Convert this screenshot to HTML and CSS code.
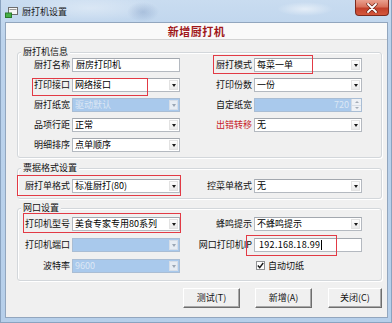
FILE: index.html
```html
<!DOCTYPE html>
<html lang="zh">
<head>
<meta charset="utf-8">
<title>厨打机设置</title>
<link rel="stylesheet" href="styles.css">
</head>
<body>
<div class="window">
  <div class="titlebar">
    <svg class="app-icon" width="14" height="12" viewBox="0 0 14 12">
      <rect x="3.5" y="1.5" width="9" height="7" fill="#f6f6f6" stroke="#6d6d6d"/>
      <rect x="4.5" y="3" width="7" height="1" fill="#9a9a9a"/>
      <rect x="0.5" y="7" width="6" height="4.5" fill="#46b046" stroke="#2c7a2c"/>
    </svg>
    <span class="title">厨打机设置</span>
    <span class="close">
      <svg width="12" height="10" viewBox="0 0 12 10">
        <path d="M2 1 L10 9 M10 1 L2 9" stroke="#6a2418" stroke-width="3.2" stroke-linecap="round"/>
        <path d="M2 1 L10 9 M10 1 L2 9" stroke="#ffffff" stroke-width="1.8" stroke-linecap="round"/>
      </svg>
    </span>
  </div>

  <div class="client">
    <div class="header">新增厨打机</div>
    <div class="body">
      <div class="group g1">
        <span class="group-label">厨打机信息</span>
        <div class="form rows20">
          <span class="lbl">厨打名称</span>
          <div class="field input">厨房打印机</div>
          <span class="lbl">厨打模式</span>
          <div class="field select"><span class="val">每菜一单</span><i class="arrow"></i></div>

          <span class="lbl">打印接口</span>
          <div class="field select"><span class="val">网络接口</span><i class="arrow"></i></div>
          <span class="lbl">打印份数</span>
          <div class="field select"><span class="val">一份</span><i class="arrow"></i></div>

          <span class="lbl">厨打纸宽</span>
          <div class="field select disabled"><span class="val">驱动默认</span><i class="arrow"></i></div>
          <span class="lbl">自定纸宽</span>
          <div class="field spin disabled"><span class="val num">720</span><span class="spinbtn"><i class="up"></i><i class="down"></i></span></div>

          <span class="lbl">品项行距</span>
          <div class="field select"><span class="val">正常</span><i class="arrow"></i></div>
          <span class="lbl red">出错转移</span>
          <div class="field select"><span class="val">无</span><i class="arrow"></i></div>

          <span class="lbl">明细排序</span>
          <div class="field select"><span class="val">点单顺序</span><i class="arrow"></i></div>
        </div>
      </div>

      <div class="group g2">
        <span class="group-label">票据格式设置</span>
        <div class="form rows20">
          <span class="lbl">厨打单格式</span>
          <div class="field select"><span class="val">标准厨打(80)</span><i class="arrow"></i></div>
          <span class="lbl">控菜单格式</span>
          <div class="field select"><span class="val">无</span><i class="arrow"></i></div>
        </div>
      </div>

      <div class="group g3">
        <span class="group-label">网口设置</span>
        <div class="form rows21">
          <span class="lbl">打印机型号</span>
          <div class="field select"><span class="val">美食专家专用80系列</span><i class="arrow"></i></div>
          <span class="lbl">蜂鸣提示</span>
          <div class="field select"><span class="val">不蜂鸣提示</span><i class="arrow"></i></div>

          <span class="lbl">打印机端口</span>
          <div class="field select disabled"><span class="val"></span><i class="arrow"></i></div>
          <span class="lbl">网口打印机IP</span>
          <div class="field input ip">192.168.18.99<i class="caret"></i></div>

          <span class="lbl">波特率</span>
          <div class="field select disabled"><span class="val">9600</span><i class="arrow"></i></div>
          <span class="lbl"></span>
          <label class="check"><span class="box"><svg width="7" height="7" viewBox="0 0 7 7"><path d="M0.8 3.6 L2.7 5.6 L6.2 1" fill="none" stroke="#1a1a1a" stroke-width="1.4"/></svg></span>自动切纸</label>
        </div>
      </div>

      <div class="buttons">
        <span class="btn b1">测试(T)</span>
        <span class="btn b2">新增(A)</span>
        <span class="btn b3">关闭(C)</span>
      </div>
    </div>
  </div>

  <div class="mark m1"></div>
  <div class="mark m2"></div>
  <div class="mark m3"></div>
  <div class="mark m4"></div>
  <div class="mark m5"></div>
</div>
</body>
</html>
```

FILE: styles.css
```css
html, body {
  margin: 0;
  padding: 0;
}

body {
  width: 392px;
  height: 323px;
  overflow: hidden;
}

.window {
  position: relative;
  width: 392px;
  height: 323px;
  overflow: hidden;
  font-family: "Noto Sans CJK SC", "Noto Sans", sans-serif;
  font-size: 9px;
  color: #000;
  background: linear-gradient(to bottom, #c9dcf0 0%, #bcd3ec 12%, #b6cfea 100%);
  box-shadow: inset 1px 0 0 #8aa3c0, inset -1px 0 0 #8aa3c0, inset 0 -1px 0 #8aa3c0;
}

/* title bar */
.titlebar {
  height: 22px;
  display: flex;
  align-items: center;
  padding-left: 5px;
  box-sizing: border-box;
  background:
    radial-gradient(ellipse 28px 7px at 305px 9px, rgba(255,255,255,0.55), rgba(255,255,255,0) 100%),
    radial-gradient(ellipse 16px 10px at 143px 12px, rgba(110,140,185,0.35), rgba(110,140,185,0) 100%),
    radial-gradient(ellipse 70px 14px at 90px 8px, rgba(255,255,255,0.35), rgba(255,255,255,0) 100%);
}

.app-icon {
  flex: none;
  margin-right: 3px;
  margin-top: 1px;
}

.title {
  color: #1b1b1b;
  line-height: 12px;
  margin-top: 1px;
}

.close {
  margin-left: auto;
  margin-right: 3px;
  align-self: flex-start;
  width: 34px;
  height: 16px;
  box-sizing: border-box;
  border: 1px solid #7d2a1d;
  border-top: none;
  border-radius: 0 0 4px 4px;
  background: linear-gradient(to bottom, #eaa08e 0%, #d9725c 45%, #c2402a 55%, #d4573c 100%);
  display: flex;
  align-items: center;
  justify-content: center;
}

/* client area */
.client {
  margin-left: 5px;
  width: 383px;
  height: 296px;
  box-sizing: border-box;
  border: 1px solid #92a6be;
  background: #f0f0f0;
  display: flex;
  flex-direction: column;
}

.header {
  height: 16px;
  line-height: 16px;
  text-align: center;
  font-size: 11px;
  font-weight: bold;
  color: #a0171a;
  background: #f9f9f9;
  border-bottom: 1px solid #d2d2d2;
  letter-spacing: 0.5px;
}

.body {
  padding: 0 5px 0 11px;
  display: flex;
  flex-direction: column;
}

/* group boxes */
.group {
  position: relative;
  width: 365px;
  box-sizing: border-box;
  border: 1px solid #d3d7db;
  border-radius: 3px;
  box-shadow: 1px 1px 0 #ffffff, inset 1px 1px 0 #ffffff;
}

.g1 { margin-top: 12px; padding: 2px 0 2px 0; }
.g2 { margin-top: 10px; padding: 7px 0 2px 0; }
.g3 { margin-top: 9px; padding: 4px 0 4px 0; }

.group-label {
  position: absolute;
  top: -7px;
  left: 3px;
  padding: 0 2px;
  line-height: 12px;
  background: #f0f0f0;
  color: #111;
}

.form {
  display: grid;
  grid-template-columns: 54px 108px 74px 108px;
  align-items: center;
}

.rows20 { grid-auto-rows: 20px; }
.rows21 { grid-auto-rows: 21px; }

.lbl {
  text-align: right;
  padding-right: 2px;
  line-height: 12px;
  white-space: nowrap;
  color: #111;
}

.lbl.red {
  color: #c8232a;
}

/* fields */
.field {
  height: 14px;
  box-sizing: border-box;
  border: 1px solid #b4b9c0;
  border-top-color: #a3a8af;
  background: #ffffff;
  display: flex;
  align-items: stretch;
  line-height: 12px;
  white-space: nowrap;
  overflow: hidden;
}

.input {
  padding-left: 3px;
}

.val {
  flex: 1;
  padding-left: 2px;
  overflow: hidden;
}

.val.num {
  text-align: right;
  padding-right: 2px;
}

.arrow {
  flex: none;
  width: 9px;
  margin: 1px 1px 1px 0;
  box-sizing: border-box;
  background: linear-gradient(to bottom, #fdfdfd, #e9e9e9);
  border: 1px solid #e2e2e2;
  display: flex;
  align-items: center;
  justify-content: center;
}

.arrow::after {
  content: "";
  width: 0;
  height: 0;
  border-left: 2px solid transparent;
  border-right: 2px solid transparent;
  border-top: 3px solid #1a1a1a;
  margin-top: 1px;
}

.disabled {
  background: #a9c9ec;
  border-color: #a9bdd4;
  color: #dce7f4;
}

.disabled .arrow {
  background: #e6ecf3;
  border-color: #d6dee8;
}

.disabled .arrow::after {
  border-top-color: #9aa6b4;
}

.spinbtn {
  flex: none;
  width: 9px;
  margin: 0 0 0 0;
  display: flex;
  flex-direction: column;
  background: #eef1f5;
  border-left: 1px solid #d3dbe4;
}

.spinbtn i {
  flex: 1;
  display: flex;
  align-items: center;
  justify-content: center;
}

.spinbtn .up {
  border-bottom: 1px solid #d8dee6;
}

.spinbtn .up::after {
  content: "";
  border-left: 2px solid transparent;
  border-right: 2px solid transparent;
  border-bottom: 2px solid #a3acb7;
}

.spinbtn .down::after {
  content: "";
  border-left: 2px solid transparent;
  border-right: 2px solid transparent;
  border-top: 2px solid #a3acb7;
}

.ip {
  padding-left: 4px;
  letter-spacing: 0.3px;
  align-items: center;
}

.caret {
  display: inline-block;
  width: 1px;
  height: 10px;
  background: #000;
  margin-left: 1px;
}

.check {
  display: flex;
  align-items: center;
  padding-left: 2px;
  line-height: 12px;
  color: #111;
}

.box {
  width: 9px;
  height: 9px;
  box-sizing: border-box;
  border: 1px solid #8f9193;
  background: #fdfdfd;
  margin-right: 3px;
  display: flex;
  align-items: center;
  justify-content: center;
}

/* buttons */
.buttons {
  display: flex;
  justify-content: flex-end;
  margin-top: 7px;
  padding-right: 0;
}

.btn {
  height: 20px;
  box-sizing: border-box;
  background: #f0f0f0;
  border-top: 1px solid #ffffff;
  border-left: 1px solid #ffffff;
  border-right: 1px solid #6e6e6e;
  border-bottom: 1px solid #6e6e6e;
  box-shadow: inset -1px -1px 0 #a8a8a8;
  display: flex;
  align-items: center;
  justify-content: center;
  line-height: 12px;
  color: #111;
}

.b1 { width: 57px; }
.b2 { width: 57px; margin-left: 15px; }
.b3 { width: 54px; margin-left: 16px; }

/* red annotation boxes drawn over the dialog */
.mark {
  position: absolute;
  box-sizing: border-box;
  border: 1px solid #e23a45;
  pointer-events: none;
}

.m1 { left: 213px; top: 55px; width: 100px; height: 19px; }
.m2 { left: 32px; top: 78px; width: 116px; height: 18px; }
.m3 { left: 17px; top: 175px; width: 164px; height: 21px; }
.m4 { left: 23px; top: 213px; width: 158px; height: 20px; }
.m5 { left: 246px; top: 235px; width: 91px; height: 21px; }
```
